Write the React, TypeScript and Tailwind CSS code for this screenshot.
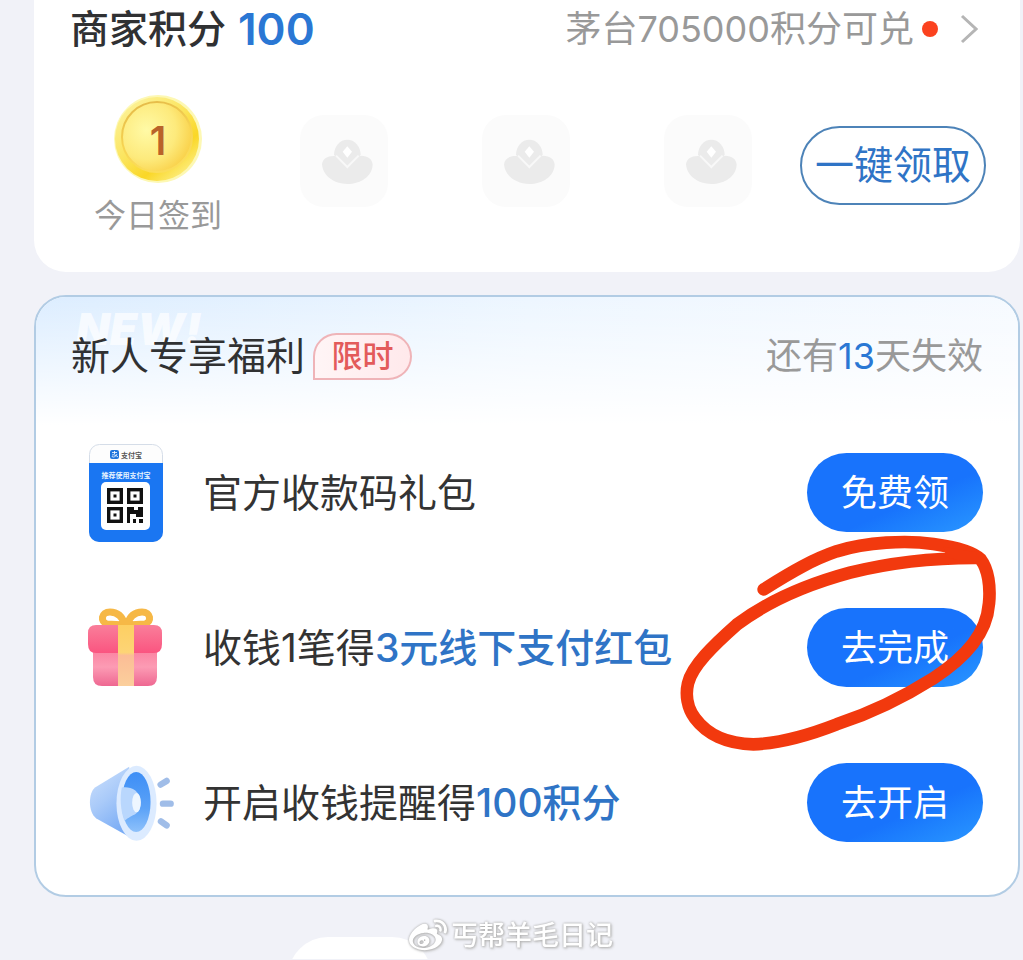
import type { ReactNode } from "react";
import { FaWeibo } from "react-icons/fa";

function CoinIcon() {
  return (
    <svg viewBox="0 0 90 90" className="w-[90px] h-[90px]" aria-hidden="true">
      <defs>
        <linearGradient id="coinRim" x1="0" y1="0" x2="0.8" y2="1">
          <stop offset="0" stopColor="#fdf6a8" />
          <stop offset="0.5" stopColor="#fbe45c" />
          <stop offset="0.75" stopColor="#fad726" />
          <stop offset="1" stopColor="#fdf08a" />
        </linearGradient>
        <radialGradient id="coinFace" cx="0.35" cy="0.4" r="0.7">
          <stop offset="0" stopColor="#fffaa6" />
          <stop offset="0.6" stopColor="#fdea7c" />
          <stop offset="1" stopColor="#f9cf45" />
        </radialGradient>
        <linearGradient id="coinEdge" x1="0" y1="0" x2="0.3" y2="1">
          <stop offset="0" stopColor="#e2b748" />
          <stop offset="0.6" stopColor="#f7d452" />
          <stop offset="1" stopColor="#fbdd5a" />
        </linearGradient>
      </defs>
      <circle cx="45" cy="45" r="44" fill="#fdf8b4" />
      <circle cx="44" cy="45" r="42" fill="url(#coinRim)" />
      <circle cx="44" cy="43" r="35" fill="url(#coinFace)" stroke="url(#coinEdge)" strokeWidth="2" />
    </svg>
  );
}

function LockedDay() {
  return (
    <div className="w-[88px] h-[92px] rounded-3xl bg-[#fbfbfb]">
      <svg viewBox="30 30 264 276" className="w-full h-full" aria-hidden="true">
        <path d="M132 150 A40 46 0 0 1 212 150 L172 188 Z" fill="#ebebeb" />
        <path d="M96 178 C98 158 118 150 142 154 L172 186 L202 154 C226 148 248 160 248 180 C246 214 212 237 172 237 C132 237 98 212 96 178 Z" fill="#ebebeb" />
        <path d="M138 152 L172 186 L206 152" fill="none" stroke="#f8f8f8" strokeWidth="6" />
        <path d="M172 124 L186 140 L172 158 L158 140 Z" fill="#ffffff" />
      </svg>
    </div>
  );
}

function QrCardIcon() {
  return (
    <svg viewBox="0 0 74 98" className="w-[74px] h-[98px]" aria-hidden="true">
      <rect x="0.5" y="0.5" width="73" height="97" rx="10" fill="#fdfdfd" stroke="#d5dde8" />
      <path d="M0 19 H74 V88 A10 10 0 0 1 64 98 H10 A10 10 0 0 1 0 88 Z" fill="#1a76f2" />
      <rect x="21" y="6" width="9" height="9" rx="2" fill="#1f74dc" />
      <path d="M23 8.500 H28 M25.500 7 V10 M23 11 C25 10 28 12 29 13 M28 10 C27 13 23 14 23 12" fill="none" stroke="#fff" strokeWidth="0.800" />
      <text x="32" y="14" fontSize="7" fontWeight="700" fill="#555">支付宝</text>
      <text x="37" y="34" fontSize="7" fontWeight="700" fill="#e6f4ff" textAnchor="middle">推荐使用支付宝</text>
      <rect x="12" y="38" width="49" height="48" rx="5" fill="#fff" />
      <g fill="none" stroke="#111" strokeWidth="3.400">
        <rect x="19.700" y="45.700" width="12.600" height="12.600" />
        <rect x="39.700" y="45.700" width="12.600" height="12.600" />
        <rect x="19.700" y="64.700" width="12.600" height="12.600" />
      </g>
      <g fill="#111">
        <rect x="24.500" y="50.500" width="3" height="3" />
        <rect x="44.500" y="50.500" width="3" height="3" />
        <rect x="24.500" y="69.500" width="3" height="3" />
        <path d="M38 63 H45 V66 H49 V63 H54 V73 H47 V70 H41 V79 H38 Z" />
        <rect x="44" y="75" width="3" height="4" />
        <rect x="50" y="75" width="4" height="4" />
      </g>
    </svg>
  );
}

function GiftIcon() {
  return (
    <svg viewBox="0 0 76 80" className="w-[76px] h-[80px]" aria-hidden="true">
      <defs>
        <linearGradient id="giftLid" x1="0" y1="0" x2="0" y2="1">
          <stop offset="0" stopColor="#f97e9a" />
          <stop offset="1" stopColor="#fa5580" />
        </linearGradient>
        <linearGradient id="giftBox" x1="0" y1="0" x2="0" y2="1">
          <stop offset="0" stopColor="#fb7f9e" />
          <stop offset="0.5" stopColor="#fc9bb4" />
          <stop offset="1" stopColor="#ee6791" />
        </linearGradient>
        <linearGradient id="giftBand" x1="0" y1="0" x2="0" y2="1">
          <stop offset="0" stopColor="#fdcf62" />
          <stop offset="0.45" stopColor="#fdd476" />
          <stop offset="0.5" stopColor="#fbbd96" />
          <stop offset="1" stopColor="#fbcf9c" />
        </linearGradient>
      </defs>
      <path d="M38 17 C35 7 29 4 23 4 C14 4 13 14 20 16 Z M40 17 C43 7 49 4 55 4 C64 4 65 14 58 16 Z" fill="#fff" stroke="#f6b846" strokeWidth="7" strokeLinejoin="round" />
      <path d="M6 40 H70 V69 Q70 78 61 78 H15 Q6 78 6 69 Z" fill="url(#giftBox)" />
      <path d="M9 17 H67 Q75 17 75 25 V36 Q75 45 67 45 H9 Q1 45 1 36 V25 Q1 17 9 17 Z" fill="url(#giftLid)" />
      <rect x="31" y="17" width="16" height="61" fill="url(#giftBand)" />
    </svg>
  );
}

function HornIcon() {
  return (
    <svg viewBox="60 42 260 232" className="w-[87px] h-[78px]" aria-hidden="true">
      <defs>
        <linearGradient id="hornBody" x1="0" y1="0" x2="0.5" y2="1">
          <stop offset="0" stopColor="#cfe2fc" />
          <stop offset="0.5" stopColor="#a9caf9" />
          <stop offset="1" stopColor="#78abf5" />
        </linearGradient>
        <linearGradient id="hornMouth" x1="0" y1="0" x2="0" y2="1">
          <stop offset="0" stopColor="#3d8ef6" />
          <stop offset="0.6" stopColor="#5ba2f7" />
          <stop offset="1" stopColor="#8ec1fb" />
        </linearGradient>
      </defs>
      <path d="M78 112 L180 50 L196 268 L82 204 C56 186 58 128 78 112 Z" fill="url(#hornBody)" />
      <ellipse cx="202" cy="159" rx="60" ry="112" fill="#dcebff" />
      <ellipse cx="201" cy="155" rx="43" ry="90" fill="url(#hornMouth)" />
      <path d="M158 112 C180 108 214 118 214 156 C214 196 190 190 166 212 C154 180 152 142 158 112 Z" fill="#b9d7fd" />
      <ellipse cx="202" cy="157" rx="13" ry="29" fill="#edf6ff" />
      <g stroke="#a0bde8" strokeWidth="19" strokeLinecap="round">
        <path d="M274 103 L292 92" />
        <path d="M281 160 L304 160" />
        <path d="M275 213 L292 225" />
      </g>
    </svg>
  );
}

// Hand-drawn red loop around the second action
function Scribble() {
  return (
    <svg
      viewBox="0 0 1059 690"
      className="absolute -right-10 -top-10 w-[353px] h-[230px] pointer-events-none"
      aria-hidden="true"
    >
      <path
        d="M281 178 C370 122 430 88 500 64 C590 36 710 30 790 42 C850 50 910 66 932 88 C955 118 962 170 957 220 C950 310 890 380 790 445 C690 508 600 550 500 583 C410 618 330 640 250 643 C170 642 110 612 75 565 C52 534 46 494 54 460 C66 408 130 346 200 284 C285 220 400 166 540 128 C660 98 790 84 914 84"
        fill="none"
        stroke="#f2390e"
        strokeWidth="38"
        strokeLinecap="round"
        strokeLinejoin="round"
      />
      <path d="M820 50 L915 66 L932 92 L900 100 L830 82 Z" fill="#f2390e" />
    </svg>
  );
}

interface TaskRowProps {
  icon: ReactNode;
  action: string;
  children: ReactNode;
  mark?: ReactNode;
}

function TaskRow({ icon, action, children, mark }: TaskRowProps) {
  return (
    <li className="relative flex items-center h-[155px] pl-4">
      <div className="w-[90px] shrink-0 flex">{icon}</div>
      <p className="flex-1 ml-[26px] text-[39px] leading-[48px] text-[#333333] whitespace-nowrap">
        {children}
      </p>
      <button
        type="button"
        className="w-[176px] h-[79px] shrink-0 rounded-full bg-linear-to-br from-[#1873fc] from-60% to-[#2b97ff] text-white text-4xl"
      >
        {action}
      </button>
      {mark}
    </li>
  );
}

export default function App() {
  return (
    <div className="min-h-screen bg-[#f1f2f8] pl-[34px] pr-[3px] font-['Inter','Noto_Sans_CJK_SC',sans-serif]">
      {/* Points */}
      <section className="bg-white rounded-b-[32px] px-9">
        <div className="flex items-center justify-between h-[58px]">
          <h2 className="flex items-center gap-3 text-[39px] leading-[48px] font-medium text-[#303133]">
            商家积分
            <span className="text-[44px] font-semibold text-[#2a77d4]">100</span>
          </h2>
          <a href="#" className="flex items-center text-4xl text-[#999999]">
            茅台705000积分可兑
            <span className="w-4 h-4 ml-2 rounded-full bg-[#fb421f]"></span>
            <svg viewBox="0 0 18 30" className="w-[18px] h-[30px] ml-[22px] mr-1.5" aria-hidden="true">
              <path d="M2 2 L16 15 L2 28" fill="none" stroke="#b5b5b5" strokeWidth="3" />
            </svg>
          </a>
        </div>

        <div className="flex items-center h-[214px] pl-6">
          <div className="flex flex-col items-center w-32 shrink-0">
            <div className="relative">
              <CoinIcon />
              <span className="absolute inset-0 flex items-center justify-center pt-1 text-[39px] font-semibold text-[#b9632a]">
                1
              </span>
            </div>
            <p className="mt-3 text-[32px] leading-10 text-[#999999]">今日签到</p>
          </div>
          <div className="flex flex-1 justify-between ml-[78px] mr-12 mb-2">
            <LockedDay />
            <LockedDay />
            <LockedDay />
          </div>
          <button
            type="button"
            className="w-[186px] h-[79px] -mr-0.5 shrink-0 rounded-full border-2 border-[#4d83b8] text-[39px] text-[#2f74c6] whitespace-nowrap"
          >
            一键领取
          </button>
        </div>
      </section>

      {/* Newcomer benefits */}
      <section className="relative mt-[23px] rounded-[32px] border-2 border-[#b2cce4] bg-white px-[35px] pb-[15px]">
        <div className="absolute inset-x-0 top-0 h-32 rounded-t-[30px] bg-linear-to-r from-[#dcedff] via-[#edf6ff] to-[#f6faff]"></div>
        <div className="absolute inset-x-0 top-0 h-32 rounded-t-[30px] bg-linear-to-b from-transparent to-white"></div>
        <span className="absolute left-10 top-4 text-[44px] leading-8 font-black italic text-white/70">
          NEW!
        </span>

        <div className="relative flex items-center justify-between h-[118px]">
          <div className="flex items-center gap-2">
            <h2 className="text-[39px] leading-10 text-[#303133]">新人专享福利</h2>
            <span className="flex items-center justify-center w-[99px] h-[47px] rounded-full rounded-bl-sm border-2 border-[#efb4b8] bg-linear-to-r from-[#fff5f6] to-[#ffe9eb] text-[31px] font-medium text-[#e35b5b]">
              限时
            </span>
          </div>
          <p className="text-4xl text-[#999999]">
            还有<span className="text-[#2a77d4]">13</span>天失效
          </p>
        </div>

        <ul className="relative">
          <TaskRow icon={<div className="pl-0.5"><QrCardIcon /></div>} action="免费领">
            官方收款码礼包
          </TaskRow>
          <TaskRow icon={<GiftIcon />} action="去完成" mark={<Scribble />}>
            收钱1笔得<span className="font-medium text-[#2f74c6]">3元线下支付红包</span>
          </TaskRow>
          <TaskRow icon={<div className="pl-0.5"><HornIcon /></div>} action="去开启">
            开启收钱提醒得<span className="font-medium text-[#2f74c6]">100积分</span>
          </TaskRow>
        </ul>
      </section>

      <footer className="relative h-[62px] overflow-hidden">
        <div className="absolute left-[254px] top-10 w-[144px] h-20 rounded-t-[40px] bg-white"></div>
        <div className="relative flex items-center justify-center gap-1 h-full pt-4 pr-8 text-[27px] font-medium text-white [filter:drop-shadow(0_0_1px_#a8a8a8)_drop-shadow(1px_1px_1px_#c4c4c4)]">
          <FaWeibo className="w-[38px] h-[38px]" aria-hidden="true" />
          <span>丐帮羊毛日记</span>
        </div>
      </footer>
    </div>
  );
}
